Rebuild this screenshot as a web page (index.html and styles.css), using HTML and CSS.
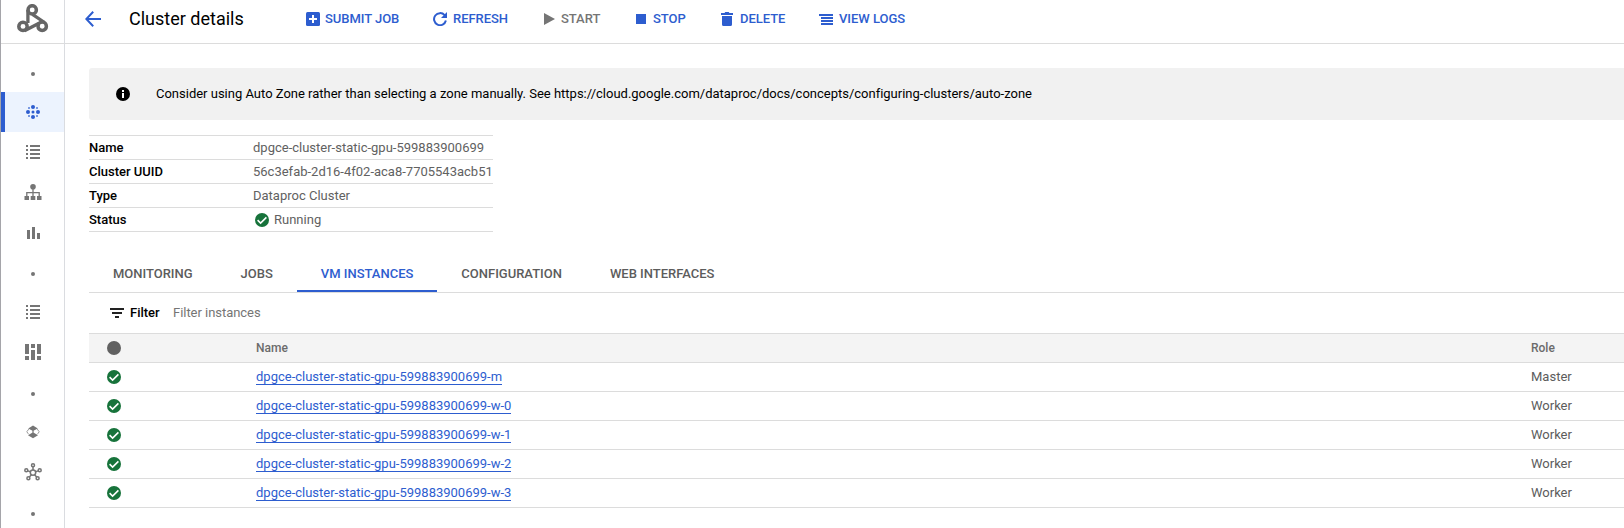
FILE: index.html
```html
<!DOCTYPE html>
<html lang="en">
<head>
<meta charset="utf-8">
<title>Cluster details</title>
<link rel="stylesheet" href="styles.css">
</head>
<body>
<svg class="defs" width="0" height="0">
  <symbol id="check" viewBox="0 0 14 14"><circle cx="7" cy="7" r="7" fill="#17733b"/><path d="M2.600 7.200 5.600 10.100 11.400 4.400" fill="none" stroke="#fff" stroke-width="1.600"/></symbol>
  <symbol id="list" viewBox="0 0 14 14"><path d="M0 0h2v2H0zM4 0h10v2H4zM0 4h2v2H0zM4 4h10v2H4zM0 8h2v2H0zM4 8h10v2H4zM0 12h2v2H0zM4 12h10v2H4z" fill="currentColor"/></symbol>
</svg>
<div class="app">
  <aside class="sidebar">
    <div class="logo">
      <svg width="32" height="30" viewBox="0 0 32 30" fill="none" stroke="#666"><g stroke-width="3.500"><circle cx="15.200" cy="5.900" r="4.200"/><circle cx="6" cy="22.400" r="4.200"/><circle cx="25.200" cy="22.200" r="4.200"/></g><path d="M10.900 6v13M15.500 10.300 27.500 18.500M7.500 26.800 22 19.300" stroke-width="3.300"/></svg>
    </div>
    <nav class="nav">
      <div class="nav-item nav-gap"><i class="dot"></i></div>
      <div class="nav-item active">
        <svg width="14" height="14" viewBox="0 0 14 14" fill="currentColor"><circle cx="7" cy="2" r="2"/><circle cx="7" cy="12" r="2"/><circle cx="2" cy="7" r="2"/><circle cx="12" cy="7" r="2"/><circle cx="7" cy="7" r="1.500"/><g opacity=".6"><path d="M2 2h2v2H2zM10 2h2v2h-2zM2 10h2v2H2zM10 10h2v2h-2z"/></g></svg>
      </div>
      <div class="nav-item"><svg width="14" height="14"><use href="#list"/></svg></div>
      <div class="nav-item">
        <svg width="18" height="16" viewBox="0 0 18 16" fill="currentColor"><circle cx="9" cy="2.800" r="2.800"/><path d="M.5 12H5v4H.5zM6.700 12h4.600v4H6.700zM13 12h4.500v4H13z"/><path d="M9 4v9M2.800 12.500V8.700h12.400v3.800" fill="none" stroke="currentColor" stroke-width="1.300"/></svg>
      </div>
      <div class="nav-item nav-bars">
        <svg width="14" height="12" viewBox="0 0 14 12" fill="currentColor"><path d="M1 3h3v9H1zM6 0h3v12H6zM11 6h3v6h-3z"/></svg>
      </div>
      <div class="nav-item nav-gap"><i class="dot"></i></div>
      <div class="nav-item"><svg width="14" height="14"><use href="#list"/></svg></div>
      <div class="nav-item">
        <svg width="16" height="16" viewBox="0 0 16 16" fill="currentColor"><path d="M0 0h4v10H0zM0 12h4v4H0zM6 0h4v4H6zM6 6h4v10H6zM12 0h4v10h-4zM12 12h4v4h-4z"/></svg>
      </div>
      <div class="nav-item nav-gap"><i class="dot"></i></div>
      <div class="nav-item">
        <svg width="14" height="14" viewBox="0 0 14 14" fill="currentColor"><path d="M7 .5 11.800 3.500 7 6 2.200 3.500zM7 7.200 12 10.200 7 13.200 2 10.200z"/><path d="M6 5.500h2v2.200H6z" opacity=".6"/><path d="M2.600 4.300.8 6.800l1.800 2.400M11.400 4.300l1.800 2.500-1.800 2.400" fill="none" stroke="currentColor" stroke-dasharray="1.800 .7"/></svg>
      </div>
      <div class="nav-item">
        <svg width="18" height="18" viewBox="0 0 18 18" fill="none" stroke="currentColor" stroke-width="1.500"><circle cx="9" cy="9.600" r="2.700"/><circle cx="9" cy="2.300" r="1.500"/><circle cx="2.300" cy="7.300" r="1.500"/><circle cx="15.700" cy="7.300" r="1.500"/><circle cx="4.400" cy="15.200" r="1.500"/><circle cx="13.600" cy="15.200" r="1.500"/><path d="M9 4v3M3.800 7.900l2.600.8M14.200 7.900l-2.600.8M5.300 14l2.200-2.300M12.700 14l-2.200-2.300"/></svg>
      </div>
      <div class="nav-item nav-gap"><i class="dot"></i></div>
    </nav>
  </aside>
  <main class="main">
    <header class="header">
      <svg class="back" width="16" height="16" viewBox="0 0 16 16" fill="none" stroke="currentColor" stroke-width="2"><path d="M16 8H1.500M8.200.8 1.300 8l6.900 7.200"/></svg>
      <h1 class="title">Cluster details</h1>
      <div class="actions">
        <button class="action submit"><svg width="14" height="14" viewBox="0 0 14 14"><rect width="14" height="14" rx="1.500" fill="currentColor"/><path d="M7 3v8M3 7h8" stroke="#fff" stroke-width="2"/></svg><span>SUBMIT JOB</span></button>
        <button class="action refresh"><svg width="14" height="14" viewBox="0 0 14 14"><path d="M11.600 3.200A6 6 0 1 0 12.900 8.500" fill="none" stroke="currentColor" stroke-width="2"/><path d="M14 0v6H8z" fill="currentColor"/></svg><span>REFRESH</span></button>
        <button class="action start"><svg width="11" height="12" viewBox="0 0 11 12"><path d="M0 0 11 6 0 12z" fill="currentColor"/></svg><span>START</span></button>
        <button class="action stop"><svg width="10" height="10"><rect width="10" height="10" fill="currentColor"/></svg><span>STOP</span></button>
        <button class="action delete"><svg width="12" height="14" viewBox="0 0 12 14"><path d="M0 1h3.500l.8-1h3.400l.8 1H12v2H0zM1 4h10v8.500q0 1.500-1.500 1.500h-7Q1 14 1 12.500z" fill="currentColor"/></svg><span>DELETE</span></button>
        <button class="action logs"><svg width="14" height="11" viewBox="0 0 14 11"><path d="M0 0h14v2H0zM2 3h12v2H2zM2 6h12v2H2zM2 9h12v2H2z" fill="currentColor"/></svg><span>VIEW LOGS</span></button>
      </div>
    </header>
    <div class="content">
      <div class="banner">
        <svg width="14" height="14" viewBox="0 0 14 14"><circle cx="7" cy="7" r="7"/><path d="M6 3h2v2H6zM6 6h2v5H6z" fill="#fff"/></svg>
        <span>Consider using Auto Zone rather than selecting a zone manually. See https://cloud.google.com/dataproc/docs/concepts/configuring-clusters/auto-zone</span>
      </div>
      <dl class="details">
        <div class="detail"><dt>Name</dt><dd>dpgce-cluster-static-gpu-599883900699</dd></div>
        <div class="detail"><dt>Cluster UUID</dt><dd>56c3efab-2d16-4f02-aca8-7705543acb51</dd></div>
        <div class="detail"><dt>Type</dt><dd>Dataproc Cluster</dd></div>
        <div class="detail"><dt>Status</dt><dd class="status"><svg width="14" height="14"><use href="#check"/></svg>Running</dd></div>
      </dl>
      <div class="tabs">
        <div class="tab">MONITORING</div>
        <div class="tab">JOBS</div>
        <div class="tab selected">VM INSTANCES</div>
        <div class="tab">CONFIGURATION</div>
        <div class="tab">WEB INTERFACES</div>
      </div>
      <div class="filter">
        <svg width="14" height="10" viewBox="0 0 14 10"><path d="M0 0h14v2H0zM2 4h10v2H2zM5 8h4v2H5z" fill="#222"/></svg>
        <b>Filter</b><span>Filter instances</span>
      </div>
      <div class="table">
        <div class="row head"><svg width="14" height="14"><circle cx="7" cy="7" r="7" fill="#616161"/></svg><span>Name</span><span>Role</span></div>
        <div class="row"><svg width="14" height="14"><use href="#check"/></svg><span><a>dpgce-cluster-static-gpu-599883900699-m</a></span><span>Master</span></div>
        <div class="row"><svg width="14" height="14"><use href="#check"/></svg><span><a>dpgce-cluster-static-gpu-599883900699-w-0</a></span><span>Worker</span></div>
        <div class="row"><svg width="14" height="14"><use href="#check"/></svg><span><a>dpgce-cluster-static-gpu-599883900699-w-1</a></span><span>Worker</span></div>
        <div class="row"><svg width="14" height="14"><use href="#check"/></svg><span><a>dpgce-cluster-static-gpu-599883900699-w-2</a></span><span>Worker</span></div>
        <div class="row"><svg width="14" height="14"><use href="#check"/></svg><span><a>dpgce-cluster-static-gpu-599883900699-w-3</a></span><span>Worker</span></div>
      </div>
    </div>
  </main>
</div>
</body>
</html>
```
FILE: styles.css
```css
* { box-sizing: border-box; }
body { margin: 0; background: #fff; color: #111; font: 13px/20px Roboto, sans-serif; overflow: hidden; }
svg { display: block; flex: none; }
.defs { position: absolute; }
.app { display: flex; height: 528px; border-left: 1px solid #a5a5aa; }
.sidebar { width: 64px; flex: none; border-right: 1px solid #dadce0; overflow: hidden; }
.logo { height: 44px; padding: 4px 0 0 16px; border-bottom: 1px solid #dcdcdc; }
.nav { padding-top: 8px; color: #757575; }
.nav-item { height: 40px; display: flex; align-items: center; justify-content: center; padding-left: 1px; }
.nav-gap { padding-top: 4px; }
.nav-bars { padding-top: 2px; }
.dot { width: 4px; height: 4px; border-radius: 2px; background: #757575; }
.active { background: #ecf3fe; color: #2d5dcf; border-left: 4px solid #2d5dcf; padding: 0 3px 0 0; }
.main { flex: 1; min-width: 0; }
.header { height: 44px; display: flex; align-items: center; border-bottom: 1px solid #dcdcdc; padding: 0 0 5px 20px; color: #2d5dcf; }
.title { width: 177px; margin: 0 0 0 28px; color: #000; font-size: 18px; font-weight: 400; line-height: 24px; }
.actions { display: flex; }
.action { display: flex; align-items: center; flex: none; height: 24px; padding: 0; border: 0; background: none; color: inherit; font: 500 13px/20px Roboto, sans-serif; letter-spacing: -.04px; gap: 5px; text-align: left; white-space: nowrap; }
.submit { width: 127px; }
.refresh { width: 111px; gap: 6px; }
.start { width: 92px; gap: 6px; color: #757575; }
.stop { width: 85px; gap: 7px; }
.delete { width: 98px; gap: 7px; }
.logs { gap: 6px; }
.content { padding: 24px 0 0 24px; }
.banner { height: 52px; display: flex; align-items: center; gap: 26px; padding-left: 27px; background: #f1f1f1; border-radius: 3px 0 0 3px; color: #000; letter-spacing: -.005px; white-space: nowrap; }
.details { width: 404px; margin: 15px 0 0; border-top: 1px solid #dcdcdc; }
.detail { display: flex; height: 24px; border-bottom: 1px solid #dcdcdc; line-height: 24px; }
dt { width: 164px; flex: none; color: #000; font-weight: 500; }
dd { margin: 0; color: #616161; white-space: nowrap; }
.status { display: flex; align-items: center; gap: 5px; padding-left: 2px; }
.tabs { display: flex; height: 37px; margin-top: 24px; border-bottom: 1px solid #dcdcdc; }
.tab { padding: 0 24px; line-height: 36px; font-weight: 500; letter-spacing: -.01px; color: #5c5c5c; }
.selected { color: #2d5dcf; border-bottom: 2px solid #2d5dcf; }
.filter { display: flex; align-items: center; height: 40px; padding-left: 21px; color: #757575; }
.filter b { margin-left: 6px; width: 43px; color: #000; font-weight: 500; }
.filter span { letter-spacing: -.04px; }
.table { border-top: 1px solid #dcdcdc; color: #5c5c5c; }
.row { display: grid; grid-template-columns: 149px 1275px 1fr; align-items: center; height: 29px; padding-left: 18px; border-bottom: 1px solid #dcdcdc; }
.head { background: #f4f4f4; font-size: 12px; font-weight: 500; color: #6b6b6b; }
.row a { display: block; width: max-content; height: 16px; line-height: 15px; color: #2d5dcf; border-bottom: 1px solid #2d5dcf; }
```
